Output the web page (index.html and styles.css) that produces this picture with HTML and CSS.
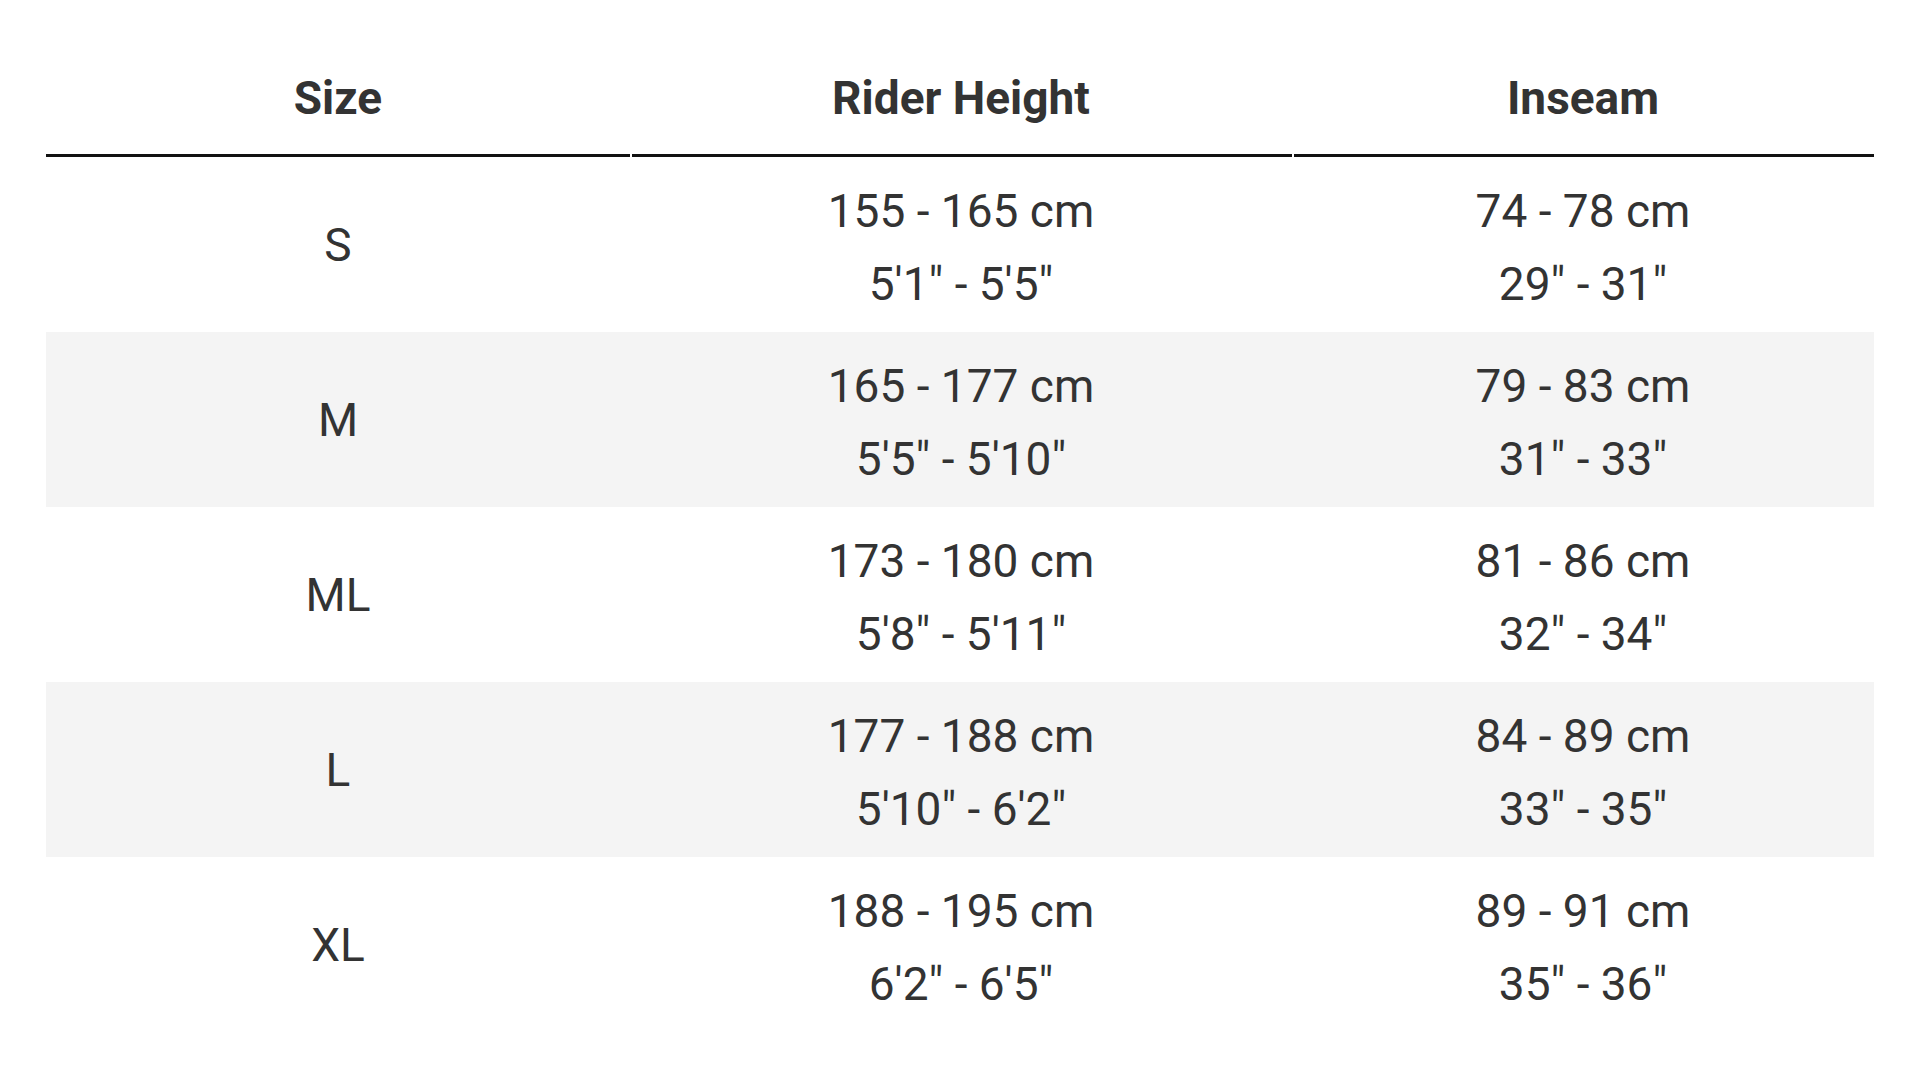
FILE: index.html
```html
<!DOCTYPE html>
<html lang="en">
<head>
<meta charset="utf-8">
<title>Size Chart</title>
<link rel="stylesheet" href="styles.css">
</head>
<body>
<table class="size-chart">
  <colgroup>
    <col class="col-size">
    <col class="col-height">
    <col class="col-inseam">
  </colgroup>
  <thead>
    <tr>
      <th>Size</th>
      <th>Rider Height</th>
      <th>Inseam</th>
    </tr>
  </thead>
  <tbody>
    <tr>
      <td>S</td>
      <td><div>155 - 165 cm</div><div>5'1" - 5'5"</div></td>
      <td><div>74 - 78 cm</div><div>29" - 31"</div></td>
    </tr>
    <tr>
      <td>M</td>
      <td><div>165 - 177 cm</div><div>5'5" - 5'10"</div></td>
      <td><div>79 - 83 cm</div><div>31" - 33"</div></td>
    </tr>
    <tr>
      <td>ML</td>
      <td><div>173 - 180 cm</div><div>5'8" - 5'11"</div></td>
      <td><div>81 - 86 cm</div><div>32" - 34"</div></td>
    </tr>
    <tr>
      <td>L</td>
      <td><div>177 - 188 cm</div><div>5'10" - 6'2"</div></td>
      <td><div>84 - 89 cm</div><div>33" - 35"</div></td>
    </tr>
    <tr>
      <td>XL</td>
      <td><div>188 - 195 cm</div><div>6'2" - 6'5"</div></td>
      <td><div>89 - 91 cm</div><div>35" - 36"</div></td>
    </tr>
  </tbody>
</table>
</body>
</html>
```

FILE: styles.css
```css
html, body {
  margin: 0;
  padding: 0;
  background: #ffffff;
}

body {
  padding: 44px 46px;
  font-family: Roboto, "Liberation Sans", Arial, sans-serif;
  color: #333333;
}

.size-chart {
  width: 100%;
  table-layout: fixed;
  border-collapse: separate;
  border-spacing: 0;
}

.col-size {
  width: 584px;
}

.col-height {
  width: 662px;
}

.size-chart th {
  font-size: 46px;
  font-weight: 700;
  line-height: 48px;
  padding: 30px 0 35px;
  text-align: center;
  color: #333333;
  background-image: linear-gradient(#111111, #111111);
  background-repeat: no-repeat;
  background-size: 100% 3px;
  background-position: left bottom;
}

.size-chart th + th {
  background-size: calc(100% - 2px) 3px;
  background-position: right bottom;
}

.size-chart td {
  font-size: 46px;
  font-weight: 400;
  line-height: 73px;
  padding: 18px 0 11px;
  text-align: center;
  vertical-align: middle;
}

.size-chart td:first-child {
  padding: 15px 0 14px;
}

.size-chart tbody tr:nth-child(even) td {
  background: #f4f4f4;
}
```
